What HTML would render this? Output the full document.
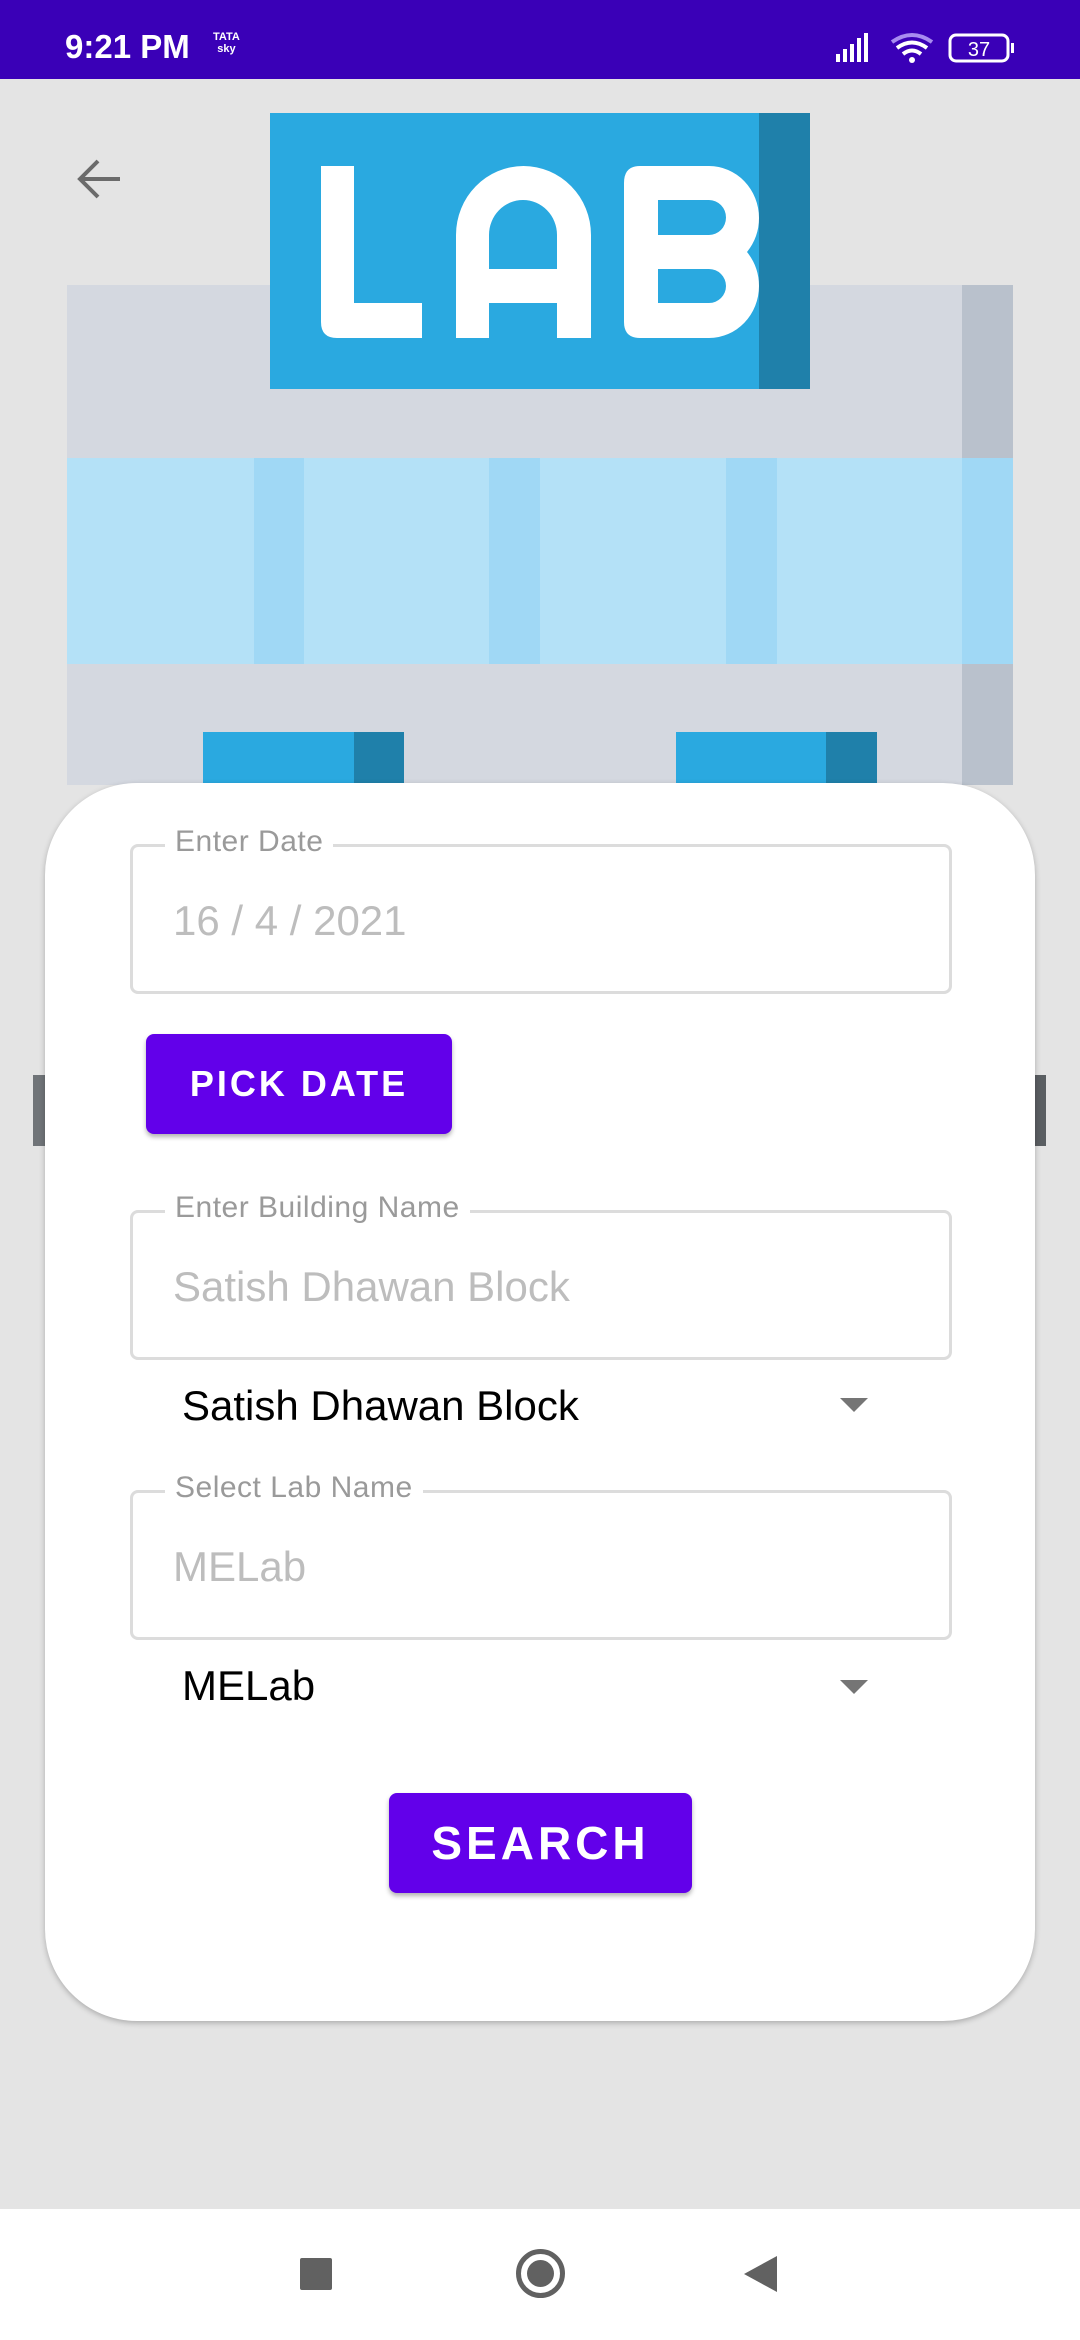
<!DOCTYPE html>
<html><head><meta charset="utf-8"><style>
*{margin:0;padding:0;box-sizing:border-box}
body{width:1080px;height:2340px;background:#e4e4e4;position:relative;overflow:hidden;font-family:"Liberation Sans",Roboto,sans-serif}
.a{position:absolute}
.field{position:absolute;left:130px;width:822px;height:150px;border:3px solid #dcdcdc;border-radius:8px}
.lbl{position:absolute;left:32px;top:-22px;background:#fff;padding:0 10px 0 10px;font-size:30px;color:#9a9a9a;letter-spacing:0.5px}
.val{position:absolute;left:40px;top:50px;font-size:42px;color:#bdbdbd}
.btn{position:absolute;background:#6200ea;color:#fff;border-radius:8px;box-shadow:0 3px 5px rgba(0,0,0,.3);display:flex;align-items:center;justify-content:center;font-weight:bold}
.dd{position:absolute;left:182px;font-size:42px;color:#000}
.tri{position:absolute;left:840px;width:0;height:0;border-left:14px solid transparent;border-right:14px solid transparent;border-top:14px solid #757575}
</style></head><body>
<div class="a" style="left:0;top:0;width:1080px;height:79px;background:#3a00b7"></div>
<div class="a" style="left:65px;top:28px;font-size:33px;color:#fff;font-weight:bold">9:21 PM</div>
<div class="a" style="left:213px;top:31px;font-size:11px;color:#fff;font-weight:bold;line-height:12px;text-align:center">TATA<br>sky</div>
<svg class="a" style="left:832px;top:30px" width="190" height="36" viewBox="0 0 190 36">
<rect x="4" y="24" width="4" height="8" fill="#fff"/><rect x="11" y="19" width="4" height="13" fill="#fff"/><rect x="18" y="14" width="4" height="18" fill="#fff"/><rect x="25" y="8" width="4" height="24" fill="#fff"/><rect x="32" y="3" width="4" height="29" fill="#fff"/>
<path d="M60 12 Q80 -2 100 12" stroke="#a88cf0" stroke-width="4" fill="none"/><path d="M65 18 Q80 7 95 18" stroke="#fff" stroke-width="4" fill="none"/><path d="M71 24 Q80 17 89 24" stroke="#fff" stroke-width="4" fill="none"/><circle cx="80" cy="30" r="3" fill="#fff"/>
<rect x="118" y="5" width="58" height="26" rx="6" stroke="#fff" stroke-width="3" fill="none"/><rect x="179" y="13" width="3" height="10" fill="#fff"/>
<text x="147" y="26" fill="#fff" font-size="20" text-anchor="middle" font-family="Liberation Sans">37</text></svg>
<svg class="a" style="left:74px;top:155px" width="50" height="50" viewBox="0 0 50 50"><path d="M46 24H6M24 6L6 24L24 42" stroke="#6b6b6b" stroke-width="4" fill="none"/></svg>
<!-- building -->
<div class="a" style="left:67px;top:285px;width:946px;height:500px;background:#d4d8e0"></div>
<div class="a" style="left:962px;top:285px;width:51px;height:500px;background:#b9c1cc"></div>
<div class="a" style="left:67px;top:458px;width:946px;height:206px;background:#b4e1f7"></div>
<div class="a" style="left:254px;top:458px;width:50px;height:206px;background:#a0d8f5"></div>
<div class="a" style="left:489px;top:458px;width:51px;height:206px;background:#a0d8f5"></div>
<div class="a" style="left:726px;top:458px;width:51px;height:206px;background:#a0d8f5"></div>
<div class="a" style="left:962px;top:458px;width:51px;height:206px;background:#a0d8f5"></div>
<div class="a" style="left:203px;top:732px;width:201px;height:60px;background:#2aa9e0"></div>
<div class="a" style="left:354px;top:732px;width:50px;height:60px;background:#1f80aa"></div>
<div class="a" style="left:676px;top:732px;width:201px;height:60px;background:#2aa9e0"></div>
<div class="a" style="left:826px;top:732px;width:51px;height:60px;background:#1f80aa"></div>
<div class="a" style="left:33px;top:1075px;width:12px;height:71px;background:#707478"></div>
<div class="a" style="left:1035px;top:1075px;width:11px;height:71px;background:#5a5e62"></div>
<!-- LAB sign -->
<div class="a" style="left:270px;top:113px;width:540px;height:276px;background:#2aa9e0"></div>
<div class="a" style="left:759px;top:113px;width:51px;height:276px;background:#1f80aa"></div>
<svg class="a" style="left:270px;top:113px" width="540" height="276" viewBox="0 0 540 276">
<path d="M51 53H84V190H152V225H67Q51 225 51 209Z" fill="#fff"/>
<path d="M186 225V122A67.5 69 0 0 1 321 122V225H287V190H219V225Z M219 156H287V122A34 35 0 0 0 219 122Z" fill="#fff" fill-rule="evenodd"/>
<path d="M354 70Q354 53 370 53H439A50 52 0 0 1 489 105Q489 124 477 139Q489 154 489 173A50 52 0 0 1 439 225H370Q354 225 354 209Z M388 87V122H439A17 17.5 0 0 0 439 87Z M388 156V190H439A17 17 0 0 0 439 156Z" fill="#fff" fill-rule="evenodd"/>
</svg>
<!-- card -->
<div class="a" style="left:45px;top:783px;width:990px;height:1238px;background:#fff;border-radius:92px;box-shadow:0 2px 6px rgba(0,0,0,.25)"></div>
<div class="field" style="top:844px"><div class="lbl">Enter Date</div><div class="val">16 / 4 / 2021</div></div>
<div class="btn" style="left:146px;top:1034px;width:306px;height:100px;font-size:36px;letter-spacing:3px">PICK DATE</div>
<div class="field" style="top:1210px"><div class="lbl">Enter Building Name</div><div class="val">Satish Dhawan Block</div></div>
<div class="dd" style="top:1382px">Satish Dhawan Block</div><div class="tri" style="top:1398px"></div>
<div class="field" style="top:1490px"><div class="lbl">Select Lab Name</div><div class="val">MELab</div></div>
<div class="dd" style="top:1662px">MELab</div><div class="tri" style="top:1680px"></div>
<div class="btn" style="left:389px;top:1793px;width:303px;height:100px;font-size:46px;letter-spacing:4px">SEARCH</div>
<!-- nav -->
<div class="a" style="left:0;top:2209px;width:1080px;height:131px;background:#fff"></div>
<div class="a" style="left:300px;top:2258px;width:32px;height:32px;background:#616161;border-radius:2px"></div>
<div class="a" style="left:516px;top:2249px;width:49px;height:49px;border:5px solid #616161;border-radius:50%"></div>
<div class="a" style="left:527px;top:2260px;width:27px;height:27px;background:#616161;border-radius:50%"></div>
<div class="a" style="left:744px;top:2256px;width:0;height:0;border-top:18px solid transparent;border-bottom:18px solid transparent;border-right:33px solid #616161"></div>
</body></html>
